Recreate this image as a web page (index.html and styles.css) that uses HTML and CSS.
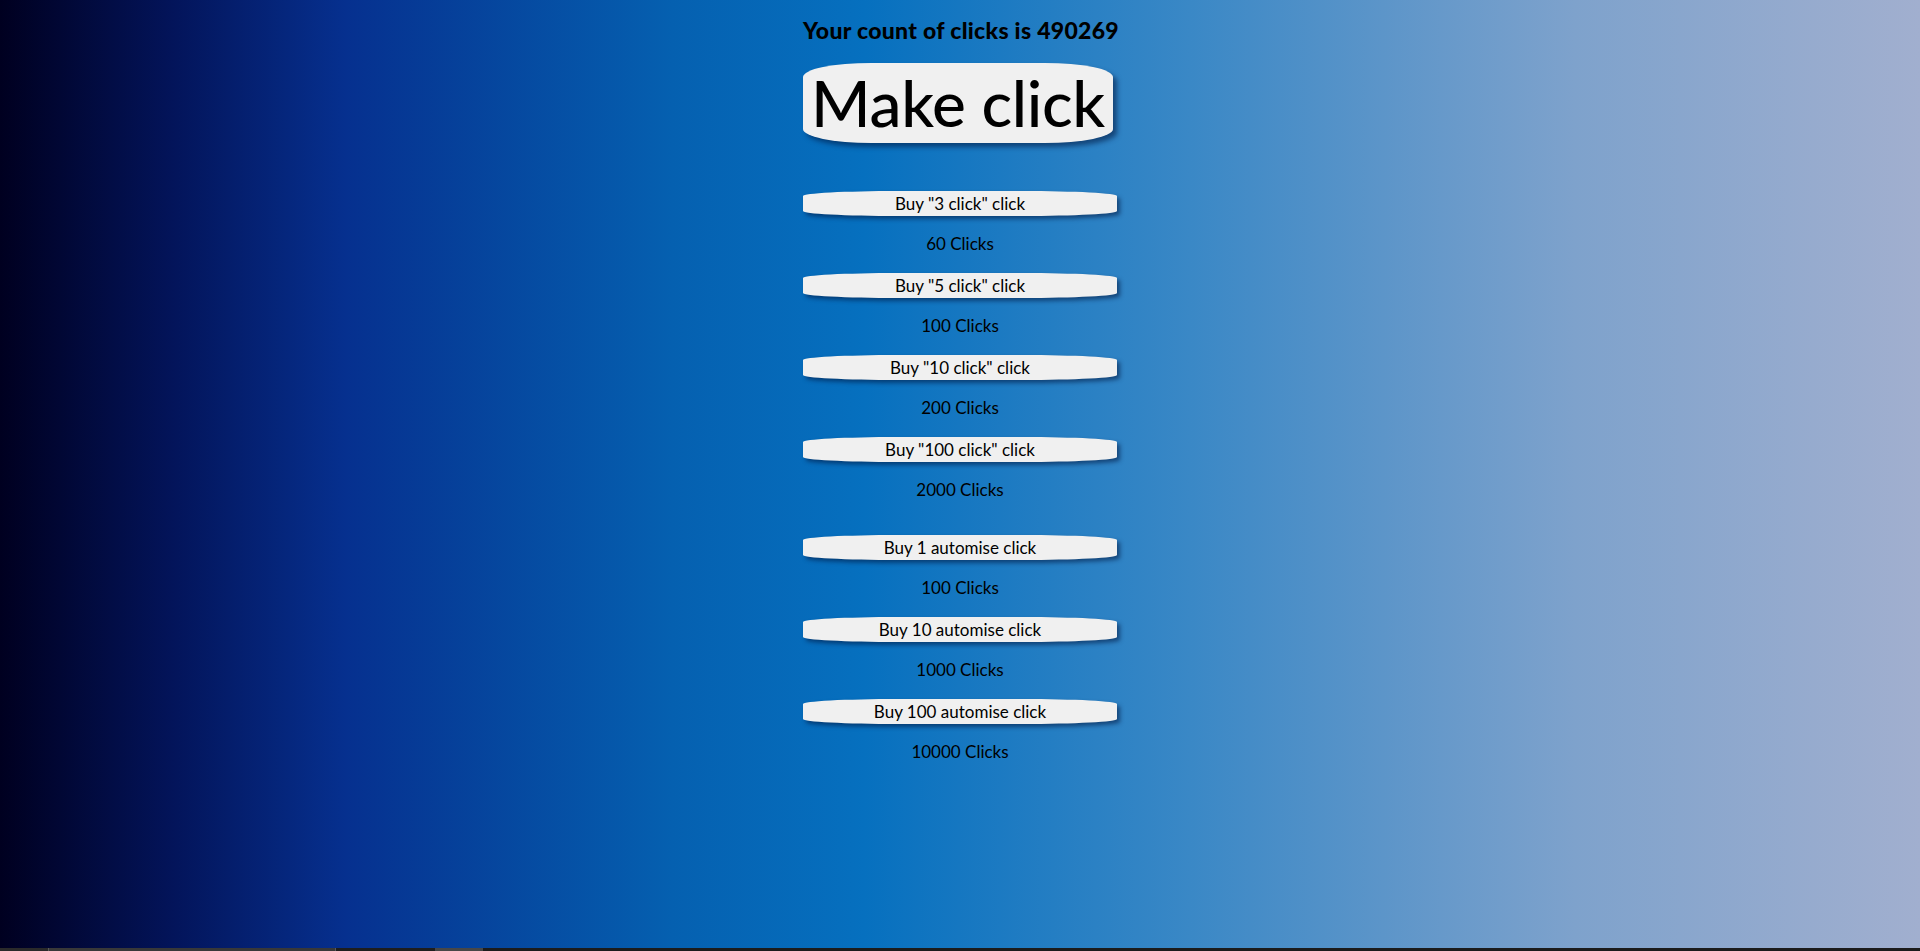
FILE: index.html
```html
<!DOCTYPE html>
<html lang="en">
<head>
<meta charset="utf-8">
<title>Clicker</title>
<link rel="stylesheet" href="styles.css">
</head>
<body>
<div class="stage">
  <div class="app">
    <h1 class="count">Your count of clicks is 490269</h1>
    <button class="make">Make click</button>
    <div class="shop">
      <div class="group">
        <button class="buy">Buy "3 click" click</button>
        <p class="price">60 Clicks</p>
        <button class="buy">Buy "5 click" click</button>
        <p class="price">100 Clicks</p>
        <button class="buy">Buy "10 click" click</button>
        <p class="price">200 Clicks</p>
        <button class="buy">Buy "100 click" click</button>
        <p class="price">2000 Clicks</p>
      </div>
      <div class="group auto">
        <button class="buy">Buy 1 automise click</button>
        <p class="price">100 Clicks</p>
        <button class="buy">Buy 10 automise click</button>
        <p class="price">1000 Clicks</p>
        <button class="buy">Buy 100 automise click</button>
        <p class="price">10000 Clicks</p>
      </div>
    </div>
  </div>
</div>
<div class="taskbar">
  <span class="tb-a"></span>
  <span class="tb-b"></span>
  <span class="tb-c"></span>
  <span class="tb-d"></span>
  <span class="tb-e"></span>
</div>
</body>
</html>
```
FILE: styles.css
```css
html, body {
  margin: 0;
  padding: 0;
  height: 100%;
}
body {
  display: flex;
  flex-direction: column;
  min-height: 100vh;
  font-family: "Lato", "Open Sans", sans-serif;
  color: #000;
  background: linear-gradient(to right, #000020 0%, #03145a 9%, #06308f 18%, #0560b0 35%, #0670bf 45%, #3a88c6 62%, #7ea2cc 82%, #a1afcf 100%);
}
.stage {
  flex: 1;
  overflow: hidden;
}
.app {
  width: 314px;
  margin: 0 auto;
  text-align: center;
}
.count {
  margin: 17px 0 0;
  font-size: 23px;
  line-height: 26px;
  font-weight: 900;
  white-space: nowrap;
  letter-spacing: 0.3px;
}
.make {
  display: block;
  width: 310px;
  height: 80px;
  margin: 20px 0 0;
  padding: 0;
  border: none;
  background: #f0f0f0;
  border-radius: 22% / 14px;
  box-shadow: 4px 4px 5px rgba(0, 20, 60, 0.55);
  font-family: inherit;
  font-size: 64px;
  line-height: 80px;
  font-weight: 500;
  color: #000;
  letter-spacing: -0.3px;
}
.shop {
  margin-top: 48px;
}
.group.auto {
  padding-top: 16px;
}
.buy {
  display: block;
  width: 314px;
  height: 25px;
  margin: 0;
  padding: 0;
  border: none;
  background: #f0f0f0;
  border-radius: 30% / 5px;
  box-shadow: 3px 3px 4px rgba(0, 20, 60, 0.55);
  font-family: inherit;
  font-size: 17px;
  line-height: 25px;
  color: #000;
}
.price {
  margin: 18px 0 19px;
  height: 20px;
  font-size: 17px;
  line-height: 20px;
}
.taskbar {
  height: 3px;
  display: flex;
  background: #1c1c1c;
}
.taskbar span {
  display: block;
  height: 3px;
}
.tb-a { width: 48px; background: #2a2a2a; }
.tb-b { width: 288px; box-sizing: border-box; background: #383838; border-left: 1px solid #5a5a5a; border-right: 1px solid #5a5a5a; }
.tb-c { width: 99px; background: #1e1e1e; }
.tb-d { width: 48px; background: #474747; }
.tb-e { flex: 1; background: #1c1c1c; }
```
